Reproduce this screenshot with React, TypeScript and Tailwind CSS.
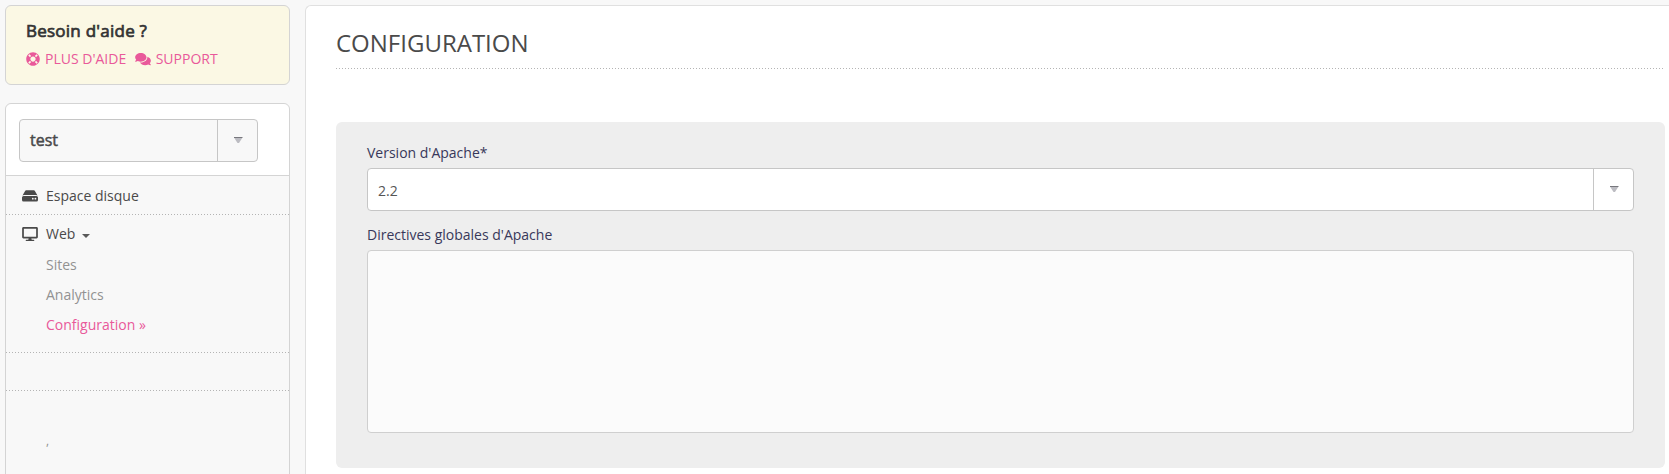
import { FaLifeRing, FaComments, FaDesktop } from "react-icons/fa";

function DottedRule() {
  return <div className="h-px bg-[repeating-linear-gradient(90deg,#b4b4b4_0px,#b4b4b4_1px,transparent_1px,transparent_3px)]" />;
}

function SelectArrow() {
  return (
    <svg width="9" height="6" viewBox="0 0 9 6" className="block">
      <path d="M0.3 1H8.2L5 6H3.5Z" fill="#bcbcc2" />
      <path d="M0 0H8.5V1H0Z" fill="#77777d" />
    </svg>
  );
}

function DriveIcon() {
  return (
    <svg width="16" height="12" viewBox="0 0 16 12" className="mr-2" fill="currentColor">
      <path d="M4.6 0.3H11.4C12.3 0.3 12.8 0.7 13.2 1.4L15.5 5.4Q14.9 5.1 14 5.1H2Q1.1 5.1 0.5 5.4L2.8 1.4C3.2 0.7 3.7 0.3 4.6 0.3Z" />
      <path
        fillRule="evenodd"
        d="M1.5 6H14.5Q16 6 16 7.5V10Q16 11.5 14.5 11.5H1.5Q0 11.5 0 10V7.5Q0 6 1.5 6ZM10.8 7.8A0.9 0.9 0 1 0 10.8 9.6A0.9 0.9 0 1 0 10.8 7.8ZM13.4 7.8A0.9 0.9 0 1 0 13.4 9.6A0.9 0.9 0 1 0 13.4 7.8Z"
      />
    </svg>
  );
}

function HelpBox() {
  return (
    <section className="h-20 shrink-0 rounded-md border border-[#d4d4d4] bg-[#fbf8e4] pl-5 pt-3">
      <h2 className="h-[26px] text-[17px] leading-[26px] tracking-[0.24px] text-[#333] [-webkit-text-stroke:0.7px_#333]">Besoin d'aide ?</h2>
      <div className="flex h-[30px] items-center text-sm text-[#e9599a]">
        <a className="flex items-center">
          <FaLifeRing className="mr-[5px] size-[14px]" />
          PLUS D'AIDE
        </a>
        <a className="ml-[9px] flex items-center">
          <FaComments className="mr-[4.5px] h-[14px] w-4" />
          SUPPORT
        </a>
      </div>
    </section>
  );
}

function Sidebar() {
  return (
    <aside className="flex w-[285px] shrink-0 flex-col gap-[18px] pt-[5px]">
      <HelpBox />
      <nav className="h-[400px] shrink-0 rounded-t-md border border-[#d4d4d4] text-sm text-[#4a4a4a]">
        <div className="h-[72px] rounded-t-md border-b border-[#d4d4d4] bg-white pl-[13px] pt-[15px]">
          <div className="flex h-[43px] w-[239px] rounded border border-[#c6c6c6] bg-[#f8f8f8]">
            <span className="flex w-[197px] items-center pb-0.5 pl-2.5 text-base [-webkit-text-stroke:0.5px_#4a4a4a]">test</span>
            <span className="flex flex-1 justify-center border-l border-[#c6c6c6] pl-0.5 pt-[17px]">
              <SelectArrow />
            </span>
          </div>
        </div>
        <div className="flex h-[38px] items-center pl-4 pt-0.5">
          <DriveIcon />
          Espace disque
        </div>
        <DottedRule />
        <div className="h-[137px] pl-4">
          <div className="flex h-[35px] items-center pt-[3px]">
            <FaDesktop className="mr-2 h-[14px] w-4" />
            Web
            <svg width="8" height="4" viewBox="0 0 8 4" className="ml-[7px] mt-1">
              <path d="M0 0H8L4 4Z" fill="#5a5a5a" />
            </svg>
          </div>
          <ul className="pl-6 leading-[30px] text-[#929292]">
            <li className="h-[30px]">Sites</li>
            <li className="h-[30px]">Analytics</li>
            <li className="h-[30px] text-[#e9599a]">Configuration »</li>
          </ul>
        </div>
        <DottedRule />
        <div className="h-[37px]" />
        <DottedRule />
        <div className="pl-10 pt-10 text-xs leading-5 text-[#929292]">,</div>
      </nav>
    </aside>
  );
}

export default function App() {
  return (
    <div className="flex h-[474px] w-full gap-[15px] overflow-hidden bg-[#f8f8f8] pl-[5px] font-['Open_Sans',sans-serif]">
      <Sidebar />
      <main className="mt-[5px] h-[500px] flex-1 rounded-tl-md border border-r-0 border-[#e0e0e0] bg-white pl-[30px] pr-1">
        <h1 className="h-[62px] pt-5 text-2xl leading-[34px] text-[#4a4a4a]">CONFIGURATION</h1>
        <DottedRule />
        <form className="mt-[53px] h-[346px] rounded-md bg-[#eee] pl-[31px] pr-[31px] pt-5 text-sm text-[#38385a]">
          <label className="block h-[26px] leading-[22px]">Version d'Apache*</label>
          <div className="flex h-[43px] rounded border border-[#c6c6c6] bg-white text-[#555]">
            <span className="flex flex-1 items-center pl-2.5 pt-0.5">2.2</span>
            <span className="flex w-10 justify-center border-l border-[#c6c6c6] pl-0.5 pt-[17px]">
              <SelectArrow />
            </span>
          </div>
          <label className="block h-[39px] pt-[13px] leading-[22px]">Directives globales d'Apache</label>
          <div className="h-[183px] rounded border border-[#cfcfcf] bg-[#fbfbfb]" />
        </form>
      </main>
    </div>
  );
}
